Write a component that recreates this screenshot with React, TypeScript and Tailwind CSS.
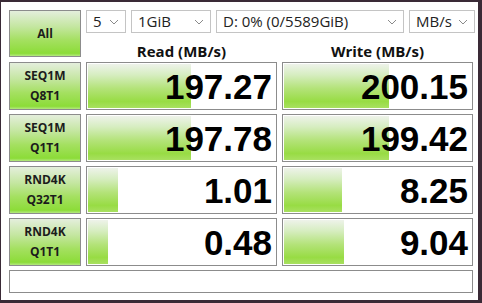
import React from "react";

const font = { fontFamily: '"Segoe UI", "Open Sans", "Liberation Sans", Arial, sans-serif' };
const numFont = { fontFamily: '"Liberation Sans", Arial, sans-serif' };

function Chevron() {
  return (
    <svg width="10" height="6" viewBox="0 0 10 6" className="shrink-0">
      <polyline points="1,1 5,5 9,1" fill="none" stroke="#8a8a8a" strokeWidth="1" />
    </svg>
  );
}

function Combo({ label, w }: { label: string; w: string }) {
  return (
    <div className={`${w} h-[23px] flex items-center justify-between border border-[#c4c4c4] bg-white pl-[6px] pr-[6px] text-[15px] text-[#222] leading-none`} style={font}>
      <span>{label}</span>
      <Chevron />
    </div>
  );
}

function TestBtn({ l1, l2 }: { l1: string; l2?: string }) {
  return (
    <div
      className="w-[72px] h-full border border-[#8c8c8c] bg-[linear-gradient(to_bottom,#e4eedc_0%,#c4e6a0_35%,#a4e060_65%,#8cdc38_94%,#b4e880_100%)] flex flex-col items-center justify-center text-[12px] font-bold text-[#1c1c1c] leading-[20px]"
      style={font}
    >
      <span>{l1}</span>
      {l2 && <span>{l2}</span>}
    </div>
  );
}

function Cell({ value, pct }: { value: string; pct: number }) {
  return (
    <div className="w-[191px] h-full border border-[#8c8c8c] bg-white relative p-px">
      <div className="h-full flex">
        <div
          className="h-full bg-[linear-gradient(to_bottom,#eef3ea_0%,#d6edc0_25%,#b4e37a_55%,#98dc44_85%,#a8e060_100%)]"
          style={{ width: `${pct}%` }}
        />
      </div>
      <div
        className="absolute inset-0 flex items-center justify-end pr-[4px] text-[35px] font-bold text-black leading-none"
        style={numFont}
      >
        {value}
      </div>
    </div>
  );
}

export default function App() {
  const rows = [
    { l1: "SEQ1M", l2: "Q8T1", r: "197.27", rp: 55, w: "200.15", wp: 56 },
    { l1: "SEQ1M", l2: "Q1T1", r: "197.78", rp: 55, w: "199.42", wp: 56 },
    { l1: "RND4K", l2: "Q32T1", r: "1.01", rp: 16, w: "8.25", wp: 31 },
    { l1: "RND4K", l2: "Q1T1", r: "0.48", rp: 10.5, w: "9.04", wp: 32 },
  ];
  return (
    <div className="w-[482px] h-[303px] bg-[#3a2a36] pt-[2px] pl-px pr-[4px] pb-[3px]">
      <div className="w-full h-full bg-white pt-[8px] pl-[8px]">
        <div className="flex h-[47px]">
          <TestBtn l1="All" />
          <div className="ml-[5px] flex flex-col">
            <div className="flex gap-[5px]">
              <Combo label="5" w="w-[40px]" />
              <Combo label="1GiB" w="w-[80px]" />
              <Combo label="D: 0% (0/5589GiB)" w="w-[188px]" />
              <Combo label="MB/s" w="w-[66px]" />
            </div>
            <div className="flex gap-[5px] flex-1 items-center pt-[7px] text-[15px] font-bold text-[#111]" style={font}>
              <div className="w-[191px] text-center">Read (MB/s)</div>
              <div className="w-[191px] text-center">Write (MB/s)</div>
            </div>
          </div>
        </div>
        <div className="flex flex-col gap-[4px] mt-[5px]">
          {rows.map((r, i) => (
            <div key={i} className="flex gap-[5px] h-[48px]">
              <TestBtn l1={r.l1} l2={r.l2} />
              <Cell value={r.r} pct={r.rp} />
              <Cell value={r.w} pct={r.wp} />
            </div>
          ))}
        </div>
        <div className="mt-[4px] w-[464px] h-[23px] border border-[#8c8c8c] bg-white" />
      </div>
    </div>
  );
}
